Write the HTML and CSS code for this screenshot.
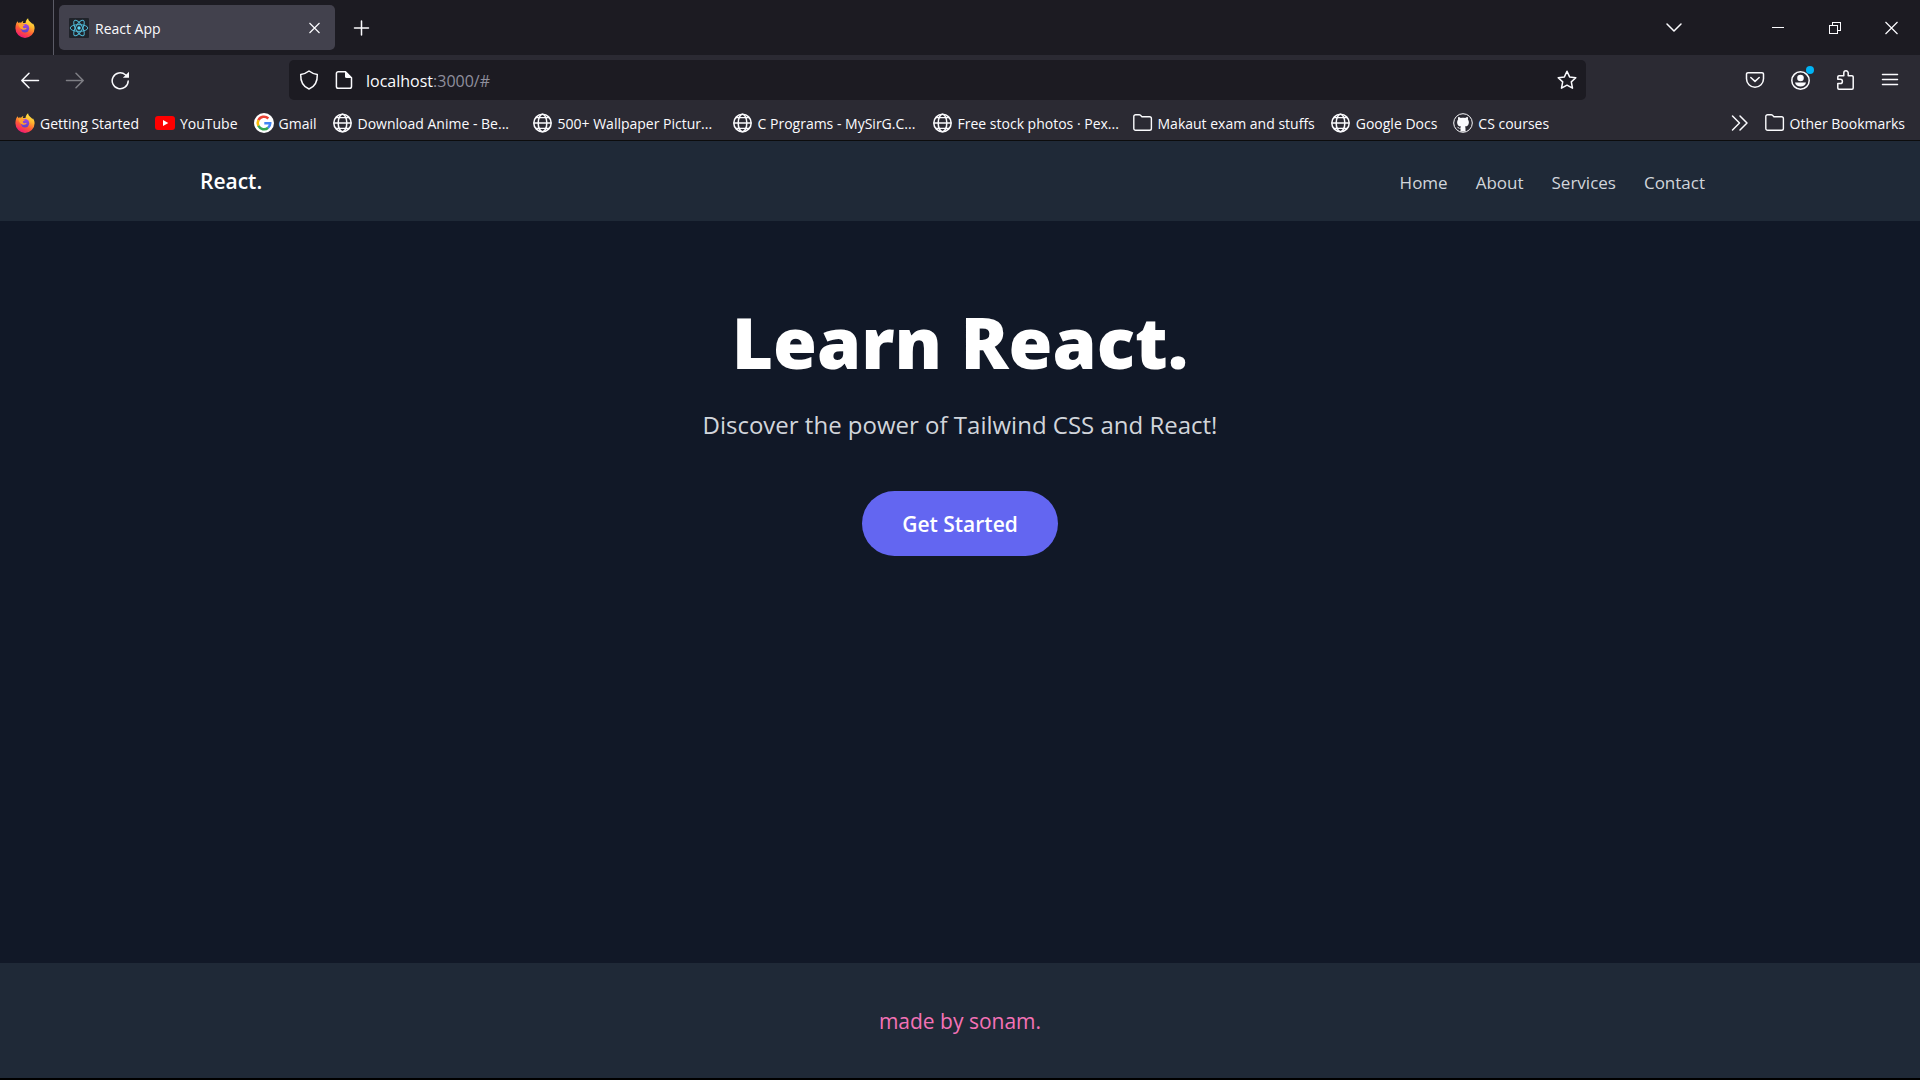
FILE: index.html
```html
<!DOCTYPE html>
<html lang="en">
<head>
<meta charset="utf-8">
<title>React App</title>
<link rel="stylesheet" href="styles.css">
</head>
<body>
<svg class="defs" aria-hidden="true">
  <defs>
    <linearGradient id="flame" x1="0.8" y1="0" x2="0.3" y2="1">
      <stop offset="0" stop-color="#fff44f"/>
      <stop offset="0.35" stop-color="#ffb52e"/>
      <stop offset="0.65" stop-color="#ff5a36"/>
      <stop offset="1" stop-color="#f0127a"/>
    </linearGradient>
    <linearGradient id="core" x1="0.5" y1="0" x2="0.5" y2="1">
      <stop offset="0" stop-color="#a044e8"/>
      <stop offset="1" stop-color="#5b44c8"/>
    </linearGradient>
    <symbol id="firefox" viewBox="0 0 20 20">
      <path fill="url(#flame)" d="M1.2 5.4C1.5 4.7 2.2 3.7 2.9 3.2c0 .7.1 1.2.5 1.7C4 4.5 5 4.400 6 4.700 6.700 3.800 7.600 3.200 8.500 3c-.5.8-.7 1.400-.6 2 1 .2 2 .1 2.600 0 .2-1.500.9-3.500 2.600-4.800 0 1.600.9 2.500 2 3.500 1.200 1 1.900 1.700 2.300 2.600.3-.3.4-.8.3-1.200 1.200 1.600 1.900 3.400 1.900 5.200a9.600 9.600 0 0 1-19.200 0c0-1.800.3-3.500.8-4.900z"/>
      <circle cx="10" cy="10.300" r="4.200" fill="url(#core)"/>
      <path fill="#ffa02e" d="M3.400 6.300c1.500-1 3.300-.7 4.400.1.900.1 1.800.1 2.200.3-.2.900-1.700 1.200-2 1.500-.3.500-.2 1.300.5 1.700.9.500 1.900.2 2.800-.2.400.3.300.9-.2 1.300-1 .9-2.500.9-3.900.5-1.700-.6-3.200-2.500-3.800-5.200z"/>
    </symbol>
    <symbol id="globe" viewBox="0 0 20 20">
      <g fill="none" stroke="#fbfbfe" stroke-width="1.500">
        <circle cx="9.500" cy="10" r="8.700"/>
        <ellipse cx="9.500" cy="10" rx="4.300" ry="8.700"/>
        <path d="M.8 10h17.400M3 4.600h13M3 15.400h13" stroke-width="1.300"/>
      </g>
    </symbol>
    <symbol id="folder" viewBox="0 0 20 20">
      <path fill="none" stroke="#fbfbfe" stroke-width="1.400" stroke-linejoin="round" d="M.8 15.500v-12A1.800 1.800 0 0 1 2.600 1.700h3.500c.6 0 1 .2 1.400.6L8.900 3.700h7.700a1.800 1.800 0 0 1 1.800 1.800v10a1.800 1.800 0 0 1-1.800 1.800h-14a1.800 1.800 0 0 1-1.800-1.800z"/>
    </symbol>
  </defs>
</svg>

<div class="chrome">
  <div class="tabstrip">
    <button class="pinned" aria-label="Firefox View"><svg class="i20"><use href="#firefox"/></svg></button>
    <div class="tab">
      <svg class="i20" viewBox="0 0 20 20">
        <rect width="20" height="20" rx="1" fill="#20232a"/>
        <g fill="none" stroke="#4fb8d6" stroke-width="1">
          <ellipse cx="10" cy="10" rx="8.800" ry="3.400"/>
          <ellipse cx="10" cy="10" rx="8.800" ry="3.400" transform="rotate(60 10 10)"/>
          <ellipse cx="10" cy="10" rx="8.800" ry="3.400" transform="rotate(120 10 10)"/>
        </g>
        <circle cx="10" cy="10" r="1.700" fill="#61dafb"/>
      </svg>
      <span class="tab-title">React App</span>
      <button class="tab-close" aria-label="Close tab"><svg class="i20" viewBox="0 0 20 20"><path class="line" d="M4.500 5l10 10M14.500 5l-10 10"/></svg></button>
    </div>
    <button class="newtab" aria-label="New tab"><svg class="i20" viewBox="0 0 20 20"><path class="line thick" d="M10.500 3v14M3.500 10h14"/></svg></button>
    <button class="alltabs" aria-label="List all tabs"><svg class="i20" viewBox="0 0 20 20"><path class="line thick" d="M3 6l7 7 7-7"/></svg></button>
    <div class="window-buttons">
      <button aria-label="Minimize"><svg class="i20" viewBox="0 0 20 20"><path class="line crisp" d="M4 9.500h12"/></svg></button>
      <button aria-label="Restore"><svg class="i20" viewBox="0 0 20 20"><path class="line crisp" d="M4.500 7.500h8v8h-8zM7.500 7.500v-3h8v8h-3"/></svg></button>
      <button aria-label="Close"><svg class="i20" viewBox="0 0 20 20"><path class="line" d="M3.500 4l12 12M15.500 4l-12 12"/></svg></button>
    </div>
  </div>

  <div class="toolbar">
    <div class="nav-buttons">
      <button aria-label="Back"><svg class="i20" viewBox="0 0 20 20"><path class="line thick" d="M18.500 10.500H2M9 3.300l-7.200 7.200L9 17.700"/></svg></button>
      <button aria-label="Forward" disabled><svg class="i20" viewBox="0 0 20 20"><path class="line thick" d="M1.500 10.500H18M11 3.300l7.200 7.200-7.200 7.200"/></svg></button>
      <button aria-label="Reload"><svg class="i20" viewBox="0 0 20 20"><path class="line thick" d="M18.200 11A8 8 0 1 1 15.400 4.700l1.500 1.300"/><path fill="#fbfbfe" d="M19 1.700v6.100h-6.100z"/></svg></button>
    </div>
    <form class="urlbar">
      <svg class="i20" viewBox="0 0 20 20"><path class="line thick" d="M10 1C7.500 3 4.500 4 1.700 4.500c-.2 6 1.800 12 8.300 14.500 6.500-2.500 8.500-8.500 8.300-14.500C15.500 4 12.500 3 10 1z"/></svg>
      <svg class="i20 page-icon" viewBox="0 0 20 20"><path class="line thick" d="M11.500 1.700H4.200a1.800 1.800 0 0 0-1.800 1.800v13a1.800 1.800 0 0 0 1.800 1.800h11.500a1.800 1.800 0 0 0 1.800-1.800V7.700z"/><path fill="#fbfbfe" d="M11 1l7 7h-5.500a1.500 1.500 0 0 1-1.500-1.500z"/></svg>
      <div class="url" contenteditable="true" role="textbox" aria-label="Address" spellcheck="false">localhost<span class="url-rest">:3000/#</span></div>
      <button type="button" aria-label="Bookmark this page"><svg class="i20" viewBox="0 0 20 20"><path class="line thick" d="M10 1.300l2.600 5.600 6.200.8-4.500 4.200 1.200 6.300-5.500-3-5.500 3 1.200-6.300L1.200 7.700l6.200-.8z"/></svg></button>
    </form>
    <div class="tool-buttons">
      <button aria-label="Save to Pocket"><svg class="i20" viewBox="0 0 20 20"><path class="line thick" d="M3 2.700h14a1.500 1.500 0 0 1 1.500 1.500v4.600a8.500 8.500 0 0 1-17 0V4.200A1.500 1.500 0 0 1 3 2.700z"/><path class="line thick" d="M5.800 7.500L10 11.400l4.200-3.900"/></svg></button>
      <button class="account" aria-label="Account"><svg class="i20" viewBox="0 0 20 20"><circle class="line thick" cx="10.500" cy="10.500" r="8.700"/><circle cx="10.500" cy="8" r="3.300" fill="#fbfbfe"/><path fill="#fbfbfe" d="M5 12.500h11c-.4 2.500-2.800 4-5.500 4s-5.100-1.500-5.500-4z"/></svg><span class="badge"></span></button>
      <button aria-label="Extensions"><svg class="i20" viewBox="0 0 20 20"><path class="line thick" d="M4 19.200h13a1.200 1.200 0 0 0 1.200-1.200V7a1.200 1.200 0 0 0-1.200-1.200h-3.800V3a2.200 2.200 0 0 0-4.400 0v2.800H4A1.200 1.200 0 0 0 2.800 7v2.300h2.500a2.100 2.100 0 0 1 0 4.200H2.800V18A1.200 1.200 0 0 0 4 19.200z"/></svg></button>
      <button aria-label="Menu"><svg class="i20" viewBox="0 0 20 20"><path class="line thick" d="M2.500 4.500h15M2.500 9.500h15M2.500 14.500h15"/></svg></button>
    </div>
  </div>

  <nav class="bookmarks" aria-label="Bookmarks">
    <a href="#"><svg class="i20"><use href="#firefox"/></svg><span>Getting Started</span></a>
    <a href="#"><svg class="i20" viewBox="0 0 20 20"><rect y="3" width="20" height="14" rx="3" fill="#f00"/><path fill="#fff" d="M8 7l5.300 3L8 13z"/></svg><span>YouTube</span></a>
    <a href="#"><svg class="i20" viewBox="0 0 20 20"><circle cx="10" cy="10" r="10" fill="#fff"/><g fill="none" stroke-width="2.600"><path stroke="#ea4335" d="M4.400 7.200A6.200 6.200 0 0 1 14.300 5.500"/><path stroke="#fbbc05" d="M4.400 12.800a6.200 6.200 0 0 1 0-5.600"/><path stroke="#34a853" d="M14.100 14.700a6.200 6.200 0 0 1-9.700-1.900"/><path stroke="#4285f4" d="M10.300 10.300h5.900c0 1.800-.7 3.300-2.100 4.400"/></g></svg><span>Gmail</span></a>
    <a href="#" class="wide"><svg class="i20"><use href="#globe"/></svg><span>Download Anime - Be...</span></a>
    <a href="#" class="wide"><svg class="i20"><use href="#globe"/></svg><span>500+ Wallpaper Pictur...</span></a>
    <a href="#" class="wide"><svg class="i20"><use href="#globe"/></svg><span>C Programs - MySirG.C...</span></a>
    <a href="#" class="wide"><svg class="i20"><use href="#globe"/></svg><span>Free stock photos · Pex...</span></a>
    <a href="#"><svg class="i20"><use href="#folder"/></svg><span>Makaut exam and stuffs</span></a>
    <a href="#"><svg class="i20"><use href="#globe"/></svg><span>Google Docs</span></a>
    <a href="#"><svg class="i20" viewBox="0 0 20 20"><circle cx="10" cy="10" r="9.300" fill="none" stroke="#fbfbfe"/><path fill="#fbfbfe" d="M7.500 18.500v-3c-2 .4-2.700-.6-3.300-1.700.9-.1 1.400.9 2 1.100.5.200 1 .1 1.300-.1.100-.6.300-1 .6-1.200-2.500-.3-4-1.500-4-4.400 0-1 .4-1.900 1-2.600-.2-.6-.2-1.500.1-2.500 1 0 1.900.5 2.600 1 1.400-.4 3-.4 4.400 0 .7-.5 1.600-1 2.600-1 .3 1 .3 1.900.1 2.500.6.700 1 1.600 1 2.600 0 2.900-1.500 4.100-4 4.400.4.400.6 1 .6 1.800v3.100z"/></svg><span>CS courses</span></a>
    <button class="more" aria-label="More bookmarks"><svg class="i20" viewBox="0 0 20 20"><path class="line thick" d="M3.500 3l7 7-7 7M11 3l7 7-7 7"/></svg></button>
    <a href="#"><svg class="i20"><use href="#folder"/></svg><span>Other Bookmarks</span></a>
  </nav>
</div>

<div class="page">
  <header class="site-header">
    <a class="brand" href="#">React.</a>
    <nav class="site-nav" aria-label="Main">
      <a href="#">Home</a>
      <a href="#">About</a>
      <a href="#">Services</a>
      <a href="#">Contact</a>
    </nav>
  </header>
  <main class="hero">
    <h1>Learn React.</h1>
    <p>Discover the power of Tailwind CSS and React!</p>
    <button class="cta">Get Started</button>
  </main>
  <footer class="site-footer">made by sonam.</footer>
</div>
</body>
</html>
```

FILE: styles.css
```css
* { box-sizing: border-box; }

body {
  margin: 0;
  min-height: 100vh;
  display: flex;
  flex-direction: column;
  background: #000;
  color: #fbfbfe;
  font-family: "Open Sans", "Noto Sans", sans-serif;
  font-size: 14px;
}

a { color: inherit; text-decoration: none; }

button {
  display: flex;
  align-items: center;
  justify-content: center;
  padding: 0;
  border: 0;
  background: none;
  color: inherit;
  font: inherit;
}

.defs { position: absolute; width: 0; height: 0; }
.i20 { display: block; flex: none; width: 20px; height: 20px; }
.line { fill: none; stroke: #fbfbfe; stroke-width: 1.2; stroke-linejoin: round; }
.thick { stroke-width: 1.5; stroke-linecap: round; }
.crisp { stroke-width: 1; stroke-linejoin: miter; shape-rendering: crispEdges; }

/* Browser chrome */
.chrome { background: #2b2a33; border-bottom: 1px solid #0c0c0d; }

.tabstrip { display: flex; align-items: center; height: 55px; background: #1c1b22; }
.pinned { width: 54px; height: 55px; padding-right: 3px; border-right: 1px solid #5b5b66; }
.tab {
  display: flex;
  align-items: center;
  gap: 6px;
  width: 276px;
  height: 45px;
  margin-left: 5px;
  padding: 0 10px;
  border-radius: 5px;
  background: #42414d;
}
.tab-title { flex: 1; padding-top: 2px; }
.newtab { width: 40px; height: 40px; margin-left: 6px; }
.alltabs { width: 40px; height: 40px; margin-left: auto; margin-right: 55px; }
.window-buttons { display: flex; }
.window-buttons button { width: 57px; height: 55px; }

.toolbar { display: flex; align-items: center; height: 50px; }
.nav-buttons { display: flex; width: 289px; padding-left: 10px; gap: 5px; }
.nav-buttons button { width: 40px; height: 40px; }
.nav-buttons button:disabled { opacity: 0.4; }
.urlbar {
  display: flex;
  align-items: center;
  flex: 1;
  height: 40px;
  padding: 0 9px 0 10px;
  border-radius: 5px;
  background: #1c1b22;
}
.page-icon { margin-left: 15px; }
.url { flex: 1; margin-left: 12px; padding-top: 2px; font-size: 16px; outline: none; }
.url-rest { color: #8f8f9d; }
.tool-buttons { display: flex; gap: 5px; width: 334px; padding-right: 10px; justify-content: flex-end; }
.tool-buttons button { width: 40px; height: 40px; }
.account { position: relative; }
.badge { position: absolute; top: 6px; right: 6px; width: 8px; height: 8px; border-radius: 50%; background: #00b3f4; }

.bookmarks { display: flex; align-items: center; gap: 16px; height: 35px; padding: 0 15px; white-space: nowrap; }
.bookmarks a { display: flex; align-items: center; gap: 5px; }
.bookmarks a span { padding-top: 2px; }
.bookmarks .wide { width: 184px; }
.more { margin-left: auto; }

/* Page */
.page { flex: 1; display: flex; flex-direction: column; margin-bottom: 2px; background: #111827; }

.site-header {
  display: flex;
  align-items: center;
  justify-content: space-between;
  height: 80px;
  padding: 0 calc(50% - 745px) 0 calc(50% - 760px);
  background: #1f2937;
}
.brand { font-size: 21px; font-weight: 600; color: #fff; }
.site-nav { display: flex; gap: 28px; padding-top: 2px; font-size: 17px; color: #d1d5db; }

.hero { flex: 1; display: flex; flex-direction: column; align-items: center; padding-top: 80px; }
.hero h1 { margin: 0; font-size: 71px; line-height: 82px; font-weight: 800; color: #fff; }
.hero p { margin: 24px 0 0; font-size: 24px; line-height: 35px; color: #d1d5db; }
.cta { height: 65px; margin-top: 49px; padding: 0 40px; border-radius: 33px; background: #6366f1; color: #fff; font-size: 21px; font-weight: 600; }

.site-footer { height: 115px; display: flex; align-items: center; justify-content: center; background: #1f2937; color: #f472b6; font-size: 21px; }
```
